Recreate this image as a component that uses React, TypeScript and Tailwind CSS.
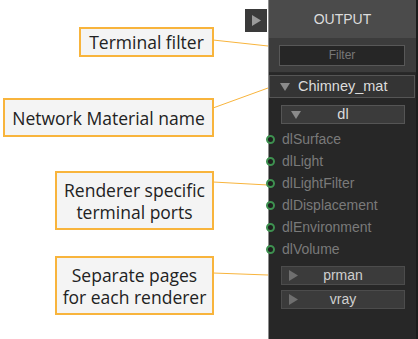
const ports = ['dlSurface', 'dlLight', 'dlLightFilter', 'dlDisplacement', 'dlEnvironment', 'dlVolume'];

const Callout = ({ className, children }: { className: string; children: React.ReactNode }) => (
  <div
    className={`absolute flex items-center justify-center border-2 border-[#f8b43c] bg-[#f4f4f4] text-center text-[17.5px] leading-[22px] text-[#222] ${className}`}
  >
    {children}
  </div>
);

const Down = ({ className }: { className: string }) => (
  <svg className={`absolute ${className}`} width="10" height="8" viewBox="0 0 10 8">
    <polygon points="0,0 10,0 5,8" fill="#8a8a8a" />
  </svg>
);

const Right = ({ className, fill }: { className: string; fill: string }) => (
  <svg className={`absolute ${className}`} width="9" height="11" viewBox="0 0 9 11">
    <polygon points="0,0 9,5.5 0,11" fill={fill} />
  </svg>
);

const RendererPage = ({ name }: { name: string }) => (
  <div className="relative ml-[12px] flex h-[19px] w-[124px] items-center justify-center border border-[#4c4c4c] bg-[#3b3b3b] text-[14px] text-[#cfcfcf]">
    <Right className="left-[7px] top-[3px]" fill="#6f6f6f" />
    {name}
  </div>
);

const App = () => {
  return (
    <div className="flex h-[339px] w-[418px] bg-white font-['Liberation_Sans',Arial,sans-serif]">
      <div className="relative w-[268px] font-['Open_Sans',sans-serif]">
        <svg className="absolute inset-0" width="268" height="339">
          <g stroke="#f8b43c" strokeWidth="1">
            <line x1="213" y1="40" x2="268" y2="46" />
            <line x1="213" y1="108" x2="268" y2="88" />
            <line x1="213" y1="182" x2="268" y2="185" />
            <line x1="213" y1="273" x2="268" y2="275" />
          </g>
        </svg>
        <Callout className="left-[79px] top-[27px] h-[30px] w-[135px]">Terminal filter</Callout>
        <Callout className="left-[3px] top-[98px] h-[39px] w-[211px]">Network Material name</Callout>
        <Callout className="left-[55px] top-[171px] h-[59px] w-[159px]">
          Renderer specific
          <br />
          terminal ports
        </Callout>
        <Callout className="left-[55px] top-[256px] h-[59px] w-[159px]">
          Separate pages
          <br />
          for each renderer
        </Callout>
      </div>

      <div className="relative flex w-[150px] flex-col border-l border-r-2 border-l-[#8c8c8c] border-r-[#1c1c1c] bg-[#272727]">
        <button type="button" className="absolute left-[-24px] top-[9px] h-[23px] w-[22px] bg-[#3a3a3a]">
          <Right className="left-[7px] top-[6px]" fill="#9a9a9a" />
        </button>
        <div className="flex h-[38px] items-center justify-center bg-[#4b4b4b] text-[14px] text-[#dcdcdc]">
          OUTPUT
        </div>
        <div className="flex h-[35px] items-center border-b border-[#2a2a2a] bg-[#3c3c3c] pl-[10px]">
          <div className="flex h-[21px] w-[126px] items-center justify-center border border-[#585858] bg-[#262626] text-[12px] text-[#777]">
            Filter
          </div>
        </div>
        <div className="flex flex-col pt-[2px]">
          <div className="relative flex h-[23px] w-[146px] items-center border border-[#555] bg-[#343434] pl-[28px] text-[14.5px] text-[#dcdcdc]">
            <Down className="left-[10px] top-[7px]" />
            Chimney_mat
          </div>
          <div className="relative ml-[12px] mt-[7px] flex h-[19px] w-[124px] items-center justify-center border border-[#555] bg-[#3b3b3b] text-[14.5px] text-[#dcdcdc]">
            <Down className="left-[9px] top-[5px]" />
            dl
          </div>
          <div className="mt-[4px] flex flex-col">
            {ports.map((p) => (
              <div key={p} className="relative flex h-[22px] items-center pl-[13px] text-[14px] text-[#7a7a7a]">
                <span className="absolute left-[-3px] h-[9px] w-[9px] rounded-full border-2 border-[#3e9150] bg-[#1e1e1e]" />
                {p}
              </div>
            ))}
          </div>
          <div className="mt-[6px] flex flex-col gap-[5px]">
            <RendererPage name="prman" />
            <RendererPage name="vray" />
          </div>
        </div>
      </div>
    </div>
  );
};

export default App;
